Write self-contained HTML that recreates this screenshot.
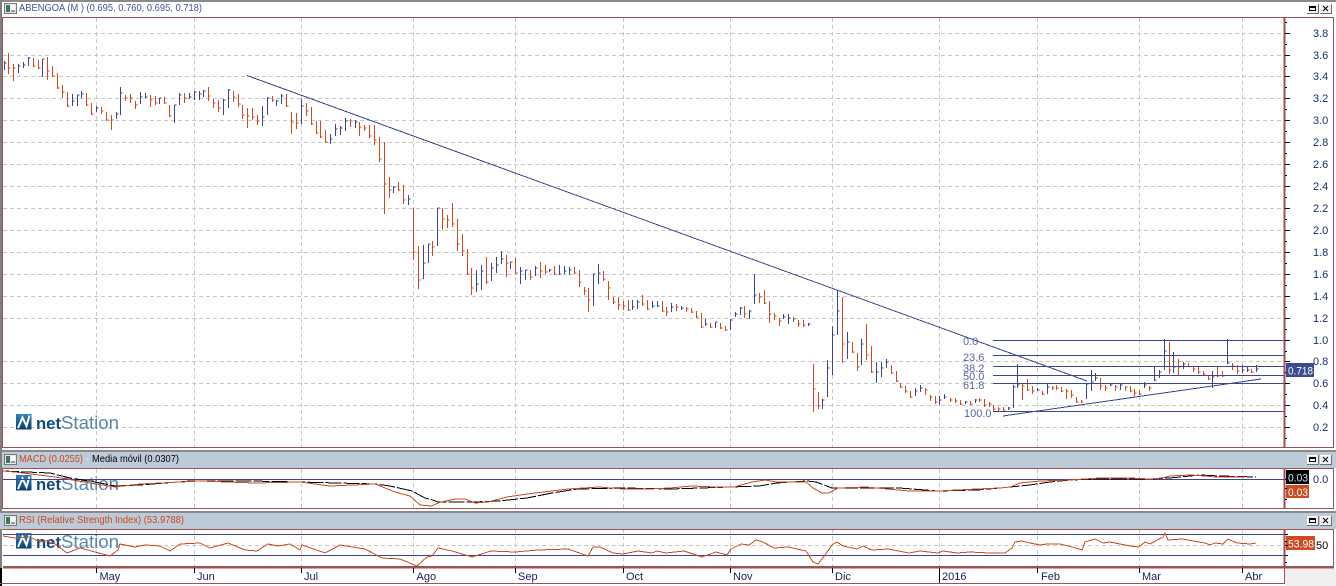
<!DOCTYPE html>
<html>
<head>
<meta charset="utf-8">
<style>
html,body{margin:0;padding:0;background:#fff}
svg{display:block;font-family:"Liberation Sans",sans-serif}
</style>
</head>
<body>
<svg width="1336" height="586" viewBox="0 0 1336 586" xmlns="http://www.w3.org/2000/svg">
<defs>
<linearGradient id="lg" x1="0" y1="0" x2="0" y2="1"><stop offset="0" stop-color="#2f86bd"/><stop offset="1" stop-color="#0b3d70"/></linearGradient>
<g id="ico"><rect x="0.5" y="0.5" width="12" height="10" fill="#e8e8e8" stroke="#777"/><rect x="2" y="2" width="4" height="7" fill="#3a7a5a"/><rect x="7" y="2" width="4" height="5" fill="#fff"/><rect x="7" y="7" width="4" height="2" fill="#999"/></g>
<g id="btn" shape-rendering="crispEdges"><rect x="0" y="0" width="11" height="9" fill="#f0f0f0"/><path d="M0.5 9V0.5H11" stroke="#fff" fill="none"/><path d="M0 9.5H11.5V0" stroke="#707070" fill="none"/><rect x="2.5" y="2.5" width="6" height="4" fill="none" stroke="#000"/><rect x="2" y="2" width="7" height="2" fill="#000"/><rect x="13" y="0" width="11" height="9" fill="#f0f0f0"/><path d="M13.5 9V0.5H24" stroke="#fff" fill="none"/><path d="M13 9.5H24.5V0" stroke="#707070" fill="none"/><path d="M16 2L21 7M21 2L16 7" stroke="#000" fill="none" shape-rendering="auto"/></g>
<g id="logo"><rect x="16" y="414" width="15.5" height="15.5" fill="url(#lg)"/><path d="M18 428L22.5 417.5L26.5 426L29.5 415.5" fill="none" stroke="#fff" stroke-width="2"/><text x="36" y="429" font-size="17" font-weight="bold" fill="#0f4a80" textLength="25" lengthAdjust="spacingAndGlyphs">net</text><text x="61" y="429" font-size="18.6" fill="#5a88a8" textLength="58" lengthAdjust="spacingAndGlyphs">Station</text></g>
</defs>

<rect width="1336" height="586" fill="#fff"/>
<!-- outer top/left -->
<rect x="0" y="0" width="1336" height="2" fill="#8a8a8a"/>
<rect x="0" y="0" width="2" height="568" fill="#808080"/>
<use href="#ico" x="4" y="3"/>
<text x="19" y="11" font-size="10.5" fill="#4352a0" textLength="183" lengthAdjust="spacingAndGlyphs">ABENGOA (M ) (0.695, 0.760, 0.695, 0.718)</text>
<use href="#btn" x="1307" y="4"/>

<!-- main grid -->
<g stroke="#c8c8c8" stroke-dasharray="4 3" fill="none" shape-rendering="crispEdges">
<path d="M3 33.5H1284M3 55.5H1284M3 76.5H1284M3 98.5H1284M3 120.5H1284M3 142.5H1284M3 164.5H1284M3 186.5H1284M3 208.5H1284M3 230.5H1284M3 252.5H1284M3 274.5H1284M3 296.5H1284M3 318.5H1284M3 361.5H1284M3 383.5H1284M3 405.5H1284M3 427.5H1284"/>
<path d="M96.5 18V447M194.5 18V447M301.5 18V447M413.5 18V447M515.5 18V447M623.5 18V447M730.5 18V447M832.5 18V447M939.5 18V447M1037.5 18V447M1139.5 18V447M1242.5 18V447"/>
<path d="M96.5 469V508M194.5 469V508M301.5 469V508M413.5 469V508M515.5 469V508M623.5 469V508M730.5 469V508M832.5 469V508M939.5 469V508M1037.5 469V508M1139.5 469V508M1242.5 469V508"/>
<path d="M96.5 529V567M194.5 529V567M301.5 529V567M413.5 529V567M515.5 529V567M623.5 529V567M730.5 529V567M832.5 529V567M939.5 529V567M1037.5 529V567M1139.5 529V567M1242.5 529V567"/>
<path d="M3 545.5H1284"/>
</g>

<use href="#logo"/>

<!-- bars orange -->
<path fill="none" stroke="#cf4a1e" shape-rendering="crispEdges" d="M8.5 53V74M8.5 68h2M13.5 64V81M13.5 68h2M33.5 58V67M33.5 66h2M38.5 60V69M38.5 68h2M47.5 57V80M47.5 71h2M52.5 66V77M52.5 76h2M57.5 73V89M57.5 88h2M62.5 85V98M62.5 92h2M67.5 92V107M67.5 106h2M86.5 93V106M86.5 105h2M91.5 103V115M91.5 114h2M101.5 107V114M101.5 111h2M106.5 112V121M106.5 120h2M111.5 115V130M111.5 120h2M125.5 95V101M125.5 98h2M130.5 94V103M130.5 98h2M135.5 101V109M135.5 105h2M150.5 95V107M150.5 100h2M155.5 96V105M155.5 103h2M164.5 97V104M164.5 103h2M169.5 105V117M169.5 116h2M184.5 93V103M184.5 98h2M208.5 87V101M208.5 96h2M213.5 99V108M213.5 103h2M218.5 100V112M218.5 108h2M233.5 91V102M233.5 97h2M238.5 94V107M238.5 104h2M242.5 105V119M242.5 115h2M247.5 108V128M247.5 116h2M252.5 108V120M252.5 117h2M257.5 115V125M257.5 121h2M272.5 96V102M272.5 100h2M286.5 94V107M286.5 106h2M291.5 112V134M291.5 122h2M296.5 113V129M296.5 123h2M306.5 103V116M306.5 111h2M311.5 107V125M311.5 124h2M316.5 121V134M316.5 133h2M320.5 121V138M320.5 137h2M325.5 130V143M325.5 142h2M350.5 119V127M350.5 121h2M359.5 122V136M359.5 127h2M364.5 125V131M364.5 128h2M369.5 125V138M369.5 136h2M374.5 125V145M374.5 140h2M379.5 137V162M379.5 159h2M384.5 142V214M384.5 184h2M389.5 177V198M389.5 190h2M398.5 182V191M398.5 190h2M403.5 185V204M403.5 200h2M413.5 208V260M413.5 252h2M418.5 246V289M418.5 280h2M432.5 241V256M432.5 247h2M442.5 208V230M442.5 219h2M447.5 215V228M447.5 220h2M452.5 203V227M452.5 224h2M457.5 219V251M457.5 244h2M462.5 234V256M462.5 251h2M467.5 249V275M467.5 274h2M471.5 268V295M471.5 288h2M486.5 257V284M486.5 282h2M506.5 255V277M506.5 263h2M515.5 258V274M515.5 273h2M530.5 270V280M530.5 277h2M540.5 262V278M540.5 271h2M545.5 265V274M545.5 272h2M554.5 266V275M554.5 274h2M574.5 267V274M574.5 273h2M579.5 270V287M579.5 282h2M584.5 287V295M584.5 291h2M588.5 288V312M588.5 300h2M603.5 271V281M603.5 279h2M608.5 281V300M608.5 288h2M613.5 297V304M613.5 302h2M618.5 297V310M618.5 305h2M623.5 301V310M623.5 306h2M628.5 300V311M628.5 310h2M642.5 295V306M642.5 304h2M647.5 300V310M647.5 309h2M662.5 301V312M662.5 311h2M666.5 307V316M666.5 312h2M676.5 304V311M676.5 307h2M686.5 307V312M686.5 309h2M691.5 308V313M691.5 312h2M696.5 311V318M696.5 317h2M701.5 313V328M701.5 327h2M710.5 323V328M710.5 327h2M720.5 323V329M720.5 328h2M725.5 326V331M725.5 330h2M744.5 306V318M744.5 314h2M759.5 293V303M759.5 297h2M764.5 290V304M764.5 303h2M769.5 301V323M769.5 314h2M774.5 313V320M774.5 316h2M779.5 318V326M779.5 321h2M793.5 317V322M793.5 319h2M798.5 320V327M798.5 324h2M803.5 320V327M803.5 325h2M813.5 364V412M813.5 389h2M818.5 392V409M818.5 406h2M842.5 297V363M842.5 344h2M852.5 342V353M852.5 352h2M857.5 353V371M857.5 367h2M866.5 324V360M866.5 355h2M871.5 346V373M871.5 372h2M891.5 365V374M891.5 373h2M896.5 371V382M896.5 381h2M900.5 383V388M900.5 387h2M905.5 386V393M905.5 391h2M910.5 391V398M910.5 397h2M925.5 388V395M925.5 390h2M930.5 395V401M930.5 397h2M935.5 396V404M935.5 402h2M950.5 398V402M950.5 400h2M955.5 398V403M955.5 401h2M960.5 400V405M960.5 404h2M970.5 401V405M970.5 404h2M979.5 398V402M979.5 400h2M984.5 399V407M984.5 405h2M989.5 402V407M989.5 404h2M993.5 405V412M993.5 409h2M998.5 407V411M998.5 409h2M1003.5 407V411M1003.5 410h2M1022.5 384V400M1022.5 386h2M1027.5 379V391M1027.5 390h2M1032.5 386V394M1032.5 391h2M1042.5 391V395M1042.5 394h2M1052.5 386V390M1052.5 388h2M1056.5 385V390M1056.5 388h2M1061.5 387V392M1061.5 391h2M1066.5 389V399M1066.5 391h2M1071.5 390V398M1071.5 395h2M1076.5 397V403M1076.5 402h2M1081.5 400V403M1081.5 402h2M1100.5 378V390M1100.5 386h2M1105.5 385V391M1105.5 388h2M1115.5 385V391M1115.5 387h2M1125.5 386V391M1125.5 387h2M1130.5 386V392M1130.5 391h2M1134.5 389V396M1134.5 393h2M1139.5 390V395M1139.5 394h2M1149.5 386V391M1149.5 388h2M1169.5 342V374M1169.5 370h2M1178.5 359V375M1178.5 367h2M1188.5 363V367M1193.5 367V372M1193.5 369h2M1198.5 367V374M1198.5 372h2M1203.5 371V375M1203.5 374h2M1208.5 375V380M1208.5 379h2M1217.5 367V377M1217.5 376h2M1222.5 371V377M1222.5 376h2M1232.5 363V370M1232.5 366h2M1237.5 365V374M1237.5 371h2M1251.5 369V373M1251.5 372h2"/>
<!-- bars blue -->
<path fill="none" stroke="#3a4690" shape-rendering="crispEdges" d="M4.5 61V70M4.5 63h2M18.5 64V73M18.5 66h2M23.5 62V68M23.5 65h2M28.5 57V66M28.5 58h2M42.5 59V77M42.5 59h2M72.5 94V106M72.5 101h2M77.5 95V106M77.5 95h2M81.5 91V98M81.5 94h2M96.5 106V112M96.5 108h2M116.5 112V119M116.5 114h2M120.5 87V115M120.5 93h2M140.5 92V104M140.5 97h2M145.5 93V98M145.5 97h2M159.5 98V104M159.5 98h2M174.5 105V123M174.5 105h2M179.5 93V105M179.5 95h2M189.5 93V99M189.5 97h2M194.5 91V100M194.5 92h2M199.5 91V100M199.5 94h2M203.5 90V97M203.5 91h2M223.5 99V115M223.5 100h2M228.5 89V108M228.5 90h2M262.5 106V126M262.5 117h2M267.5 97V115M267.5 98h2M276.5 100V106M276.5 101h2M281.5 94V104M281.5 96h2M301.5 99V124M301.5 106h2M330.5 134V144M330.5 139h2M335.5 124V136M335.5 129h2M340.5 126V135M340.5 128h2M345.5 118V131M345.5 121h2M355.5 120V128M355.5 122h2M393.5 186V193M393.5 187h2M408.5 195V205M408.5 199h2M423.5 245V279M423.5 263h2M428.5 244V263M428.5 244h2M437.5 208V246M437.5 208h2M476.5 270V292M476.5 284h2M481.5 265V290M481.5 271h2M491.5 263V281M491.5 268h2M496.5 257V273M496.5 265h2M501.5 251V264M501.5 259h2M510.5 262V269M510.5 262h2M520.5 267V284M520.5 271h2M525.5 270V280M525.5 270h2M535.5 266V276M535.5 268h2M549.5 269V272M549.5 270h2M559.5 265V275M559.5 274h2M564.5 266V274M564.5 271h2M569.5 267V275M569.5 270h2M593.5 274V306M593.5 274h2M598.5 264V284M598.5 273h2M632.5 300V310M632.5 307h2M637.5 300V309M637.5 302h2M652.5 301V308M652.5 306h2M657.5 301V307M657.5 306h2M671.5 303V312M671.5 307h2M681.5 306V310M681.5 308h2M705.5 319V326M705.5 324h2M715.5 322V328M715.5 322h2M730.5 319V330M730.5 320h2M735.5 312V317M735.5 314h2M740.5 307V315M740.5 308h2M749.5 310V319M749.5 311h2M754.5 274V304M754.5 295h2M783.5 314V319M783.5 317h2M788.5 314V324M788.5 318h2M808.5 323V326M808.5 324h2M822.5 399V409M822.5 400h2M827.5 360V397M827.5 368h2M832.5 326V375M832.5 335h2M837.5 290V335M837.5 311h2M847.5 332V359M847.5 342h2M861.5 339V365M861.5 344h2M876.5 362V383M876.5 372h2M881.5 362V377M881.5 368h2M886.5 359V368M886.5 362h2M915.5 388V396M915.5 391h2M920.5 385V392M920.5 388h2M939.5 396V405M939.5 400h2M944.5 394V399M944.5 397h2M965.5 401V404M965.5 402h2M975.5 399V403M975.5 400h2M1008.5 407V410M1008.5 408h2M1013.5 385V408M1013.5 387h2M1017.5 364V388M1017.5 385h2M1037.5 388V391M1037.5 390h2M1047.5 384V394M1047.5 387h2M1086.5 383V399M1086.5 384h2M1091.5 370V391M1091.5 382h2M1095.5 373V381M1095.5 378h2M1110.5 384V386M1110.5 385h2M1120.5 384V390M1120.5 385h2M1144.5 382V388M1144.5 385h2M1154.5 367V381M1154.5 380h2M1159.5 370V378M1159.5 372h2M1164.5 339V370M1164.5 351h2M1173.5 352V373M1173.5 367h2M1183.5 362V369M1183.5 364h2M1212.5 371V388M1212.5 377h2M1227.5 339V364M1227.5 363h2M1242.5 365V373M1242.5 370h2M1247.5 367V372M1247.5 370h2M1256.5 365V372M1256.5 369h2"/>

<!-- trend and fib -->
<g stroke="#3a4690" fill="none" shape-rendering="crispEdges">
<path d="M247 75.5L1087 381"/>
<path d="M1003 416L1261 379"/>
<path d="M993 340.5H1284M993 355.5H1284M993 366.5H1284M993 375.5H1284M993 383.5H1284M993 411.5H1284"/>
</g>
<g font-size="11" fill="#5a64a8">
<text x="963" y="345">0.0</text>
<text x="963" y="361">23.6</text>
<text x="963" y="372">38.2</text>
<text x="963" y="380">50.0</text>
<text x="963" y="389">61.8</text>
<text x="964" y="417">100.0</text>
</g>

<!-- main frame -->
<g fill="none" stroke="#9c5252" shape-rendering="crispEdges">
<path d="M2.5 17.5H1333.5V447.5H2.5Z"/>
<path d="M1284.5 17V447" stroke-width="2"/>
</g>
<path stroke="#000" fill="none" shape-rendering="crispEdges" d="M1285 33.5h5M1285 55.5h5M1285 76.5h5M1285 98.5h5M1285 120.5h5M1285 142.5h5M1285 164.5h5M1285 186.5h5M1285 208.5h5M1285 230.5h5M1285 252.5h5M1285 274.5h5M1285 296.5h5M1285 318.5h5M1285 340.5h5M1285 361.5h5M1285 383.5h5M1285 405.5h5M1285 427.5h5M1285 22.5h2M1285 44.5h2M1285 66.5h2M1285 87.5h2M1285 109.5h2M1285 131.5h2M1285 153.5h2M1285 175.5h2M1285 197.5h2M1285 219.5h2M1285 241.5h2M1285 263.5h2M1285 285.5h2M1285 307.5h2M1285 329.5h2M1285 351.5h2M1285 372.5h2M1285 394.5h2M1285 416.5h2M1285 438.5h2"/>
<g font-size="11" fill="#1c2c70">
<text x="1313" y="37">3.8</text><text x="1313" y="59">3.6</text><text x="1313" y="80">3.4</text><text x="1313" y="102">3.2</text><text x="1313" y="124">3.0</text><text x="1313" y="146">2.8</text><text x="1313" y="168">2.6</text><text x="1313" y="190">2.4</text><text x="1313" y="212">2.2</text><text x="1313" y="234">2.0</text><text x="1313" y="256">1.8</text><text x="1313" y="278">1.6</text><text x="1313" y="300">1.4</text><text x="1313" y="322">1.2</text><text x="1313" y="344">1.0</text><text x="1313" y="365">0.8</text><text x="1313" y="387">0.6</text><text x="1313" y="409">0.4</text><text x="1313" y="431">0.2</text>
</g>
<rect x="1286" y="363" width="28" height="14" fill="#3d4a8f"/>
<text x="1288" y="374.5" font-size="11" fill="#fff" textLength="25" lengthAdjust="spacingAndGlyphs">0.718</text>

<!-- MACD -->
<rect x="0" y="450" width="1336" height="2.5" fill="#8a8a8a"/>
<rect x="0" y="452" width="1336" height="16" fill="#bdcbd9"/>
<rect x="0" y="450" width="2" height="118" fill="#808080"/>
<use href="#ico" x="4" y="454"/>
<text x="19" y="462" font-size="10.5" fill="#c8461e" textLength="64" lengthAdjust="spacingAndGlyphs">MACD (0.0255)</text>
<text x="86" y="462" font-size="10" fill="#fff">-</text>
<text x="92" y="462" font-size="10.5" fill="#000" textLength="87" lengthAdjust="spacingAndGlyphs">Media móvil (0.0307)</text>
<use href="#btn" x="1307" y="455"/>
<path fill="none" stroke="#9c5252" shape-rendering="crispEdges" d="M2.5 468.5H1333.5V508.5H2.5Z"/>
<path fill="none" stroke="#9c5252" stroke-width="2" shape-rendering="crispEdges" d="M1284.5 468V508"/>
<g transform="translate(0,61)"><use href="#logo"/></g>
<path stroke="#3a4690" fill="none" shape-rendering="crispEdges" d="M3 479.5H1284"/>
<polyline fill="none" stroke="#000" stroke-dasharray="16 2" shape-rendering="crispEdges" points="3,471 50,473 70,478 95,482 115,486 140,485 190,481 250,481 300,482 375,484 390,486 412,491 425,498 433,500 438,502 474,502 499,501 527,498 552,493 577,489 624,488 670,489 731,487 759,486 777,483 807,481 816,482 832,488 866,488 899,488 938,491 977,490 1000,488 1030,485 1050,482 1070,480 1100,479 1150,479 1170,478 1180,477 1200,475 1220,476 1256,477"/>
<polyline fill="none" stroke="#cf4a1e" shape-rendering="crispEdges" points="3,471 15,472 55,477 90,483 115,487 140,484 200,481 255,483 300,482 330,486 375,484 395,492 410,496 420,505 431,506 441,502 456,499 465,499 475,503 488,502 507,497 527,494 552,491 568,489 599,487 623,489 649,489 670,488 691,486 716,487 734,487 752,482 765,480 777,482 806,482 813,488 822,493 829,493 838,488 866,487 909,491 938,491 977,489 1000,488 1010,487 1020,483 1040,481 1070,480 1100,478 1130,478 1150,479 1162,478 1170,476 1190,475 1205,476 1215,477 1245,477"/>
<rect x="1286" y="470" width="23" height="14" fill="#000"/>
<text x="1288" y="481.5" font-size="11" fill="#cfe6ff" textLength="20" lengthAdjust="spacingAndGlyphs">0.03</text>
<rect x="1286" y="485" width="23" height="13" fill="#cf4a1e"/>
<text x="1288" y="496" font-size="11" fill="#fff" textLength="20" lengthAdjust="spacingAndGlyphs">0.03</text>
<text x="1313" y="483" font-size="11" fill="#1c2c70">0.0</text>
<path stroke="#000" fill="none" shape-rendering="crispEdges" d="M1285 479.5h3M1285 488.5h2M1285 499.5h2"/>

<!-- RSI -->
<rect x="0" y="511" width="1336" height="2.5" fill="#8a8a8a"/>
<rect x="0" y="513" width="1336" height="16" fill="#bdcbd9"/>
<use href="#ico" x="4" y="515"/>
<text x="19" y="523" font-size="10.5" fill="#c8461e" textLength="165" lengthAdjust="spacingAndGlyphs">RSI (Relative Strength Index) (53.9788)</text>
<use href="#btn" x="1307" y="516"/>
<path fill="none" stroke="#9c5252" shape-rendering="crispEdges" d="M2.5 529.5H1333.5"/>
<path fill="none" stroke="#9c5252" shape-rendering="crispEdges" d="M1333.5 529V567"/>
<path fill="none" stroke="#9c5252" stroke-width="2" shape-rendering="crispEdges" d="M1284.5 529V568"/>
<g transform="translate(0,119)"><use href="#logo"/></g>
<path stroke="#3a4690" fill="none" shape-rendering="crispEdges" d="M3 534.5H1284M3 555.5H1284"/>
<polyline fill="none" stroke="#cf4a1e" shape-rendering="crispEdges" points="3,536 15,538 30,537 40,542 50,540 67,553 80,548 95,552 110,556 118,550 120,544 135,547 145,545 160,546 170,551 180,544 200,543 210,548 228,543 245,550 257,551 268,544 278,546 290,544 300,550 302,545 325,553 340,545 365,549 382,558 400,559 417,566 427,557 432,556 438,548 452,551 472,557 491,551 515,552 538,550 568,549 588,556 593,547 600,547 613,553 623,554 638,551 652,553 657,551 666,553 684,551 702,557 716,552 727,555 731,549 741,544 749,545 756,540 763,542 774,548 788,547 806,551 813,562 818,564 825,555 832,545 837,542 843,546 857,549 863,546 872,550 888,549 909,553 920,551 938,553 943,551 957,553 970,552 990,553 1005,553 1012,548 1015,542 1022,541 1030,543 1040,545 1047,544 1060,544 1072,547 1082,550 1085,542 1095,539 1103,543 1110,542 1120,544 1130,546 1139,547 1145,542 1150,544 1163,537 1165,533 1168,540 1182,539 1205,543 1210,545 1215,543 1223,544 1228,539 1237,543 1250,544 1256,543"/>
<rect x="1286" y="536" width="29" height="14" fill="#cf4a1e"/>
<text x="1288" y="547.5" font-size="11" fill="#fff" textLength="26" lengthAdjust="spacingAndGlyphs">53.98</text>
<text x="1316" y="549" font-size="11" fill="#000">50</text>
<path stroke="#000" fill="none" shape-rendering="crispEdges" d="M1285 534.5h3M1285 541.5h2M1285 545.5h3M1285 555.5h3M1285 562.5h2"/>

<!-- date strip -->
<rect x="1285" y="569" width="51" height="17" fill="#f0f0f0"/>
<rect x="3" y="566" width="1331" height="2.5" fill="#9c5252"/>
<rect x="0" y="568" width="2" height="18" fill="#000"/>
<path stroke="#9c5252" fill="none" shape-rendering="crispEdges" d="M0 583.5H1284.5V568"/>
<path stroke="#000" fill="none" shape-rendering="crispEdges" d="M96.5 568v5M194.5 568v5M301.5 568v5M413.5 568v5M515.5 568v5M623.5 568v5M730.5 568v5M832.5 568v5M939.5 568v15M1037.5 568v5M1139.5 568v5M1242.5 568v5"/>
<g font-size="11" fill="#14205c">
<text x="99.5" y="580">May</text><text x="197" y="580">Jun</text><text x="304" y="580">Jul</text><text x="416.5" y="580">Ago</text><text x="518" y="580">Sep</text><text x="626" y="580">Oct</text><text x="733" y="580">Nov</text><text x="835" y="580">Dic</text><text x="942" y="580">2016</text><text x="1041" y="580">Feb</text><text x="1142" y="580">Mar</text><text x="1245" y="580">Abr</text>
</g>
</svg>
</body>
</html>
